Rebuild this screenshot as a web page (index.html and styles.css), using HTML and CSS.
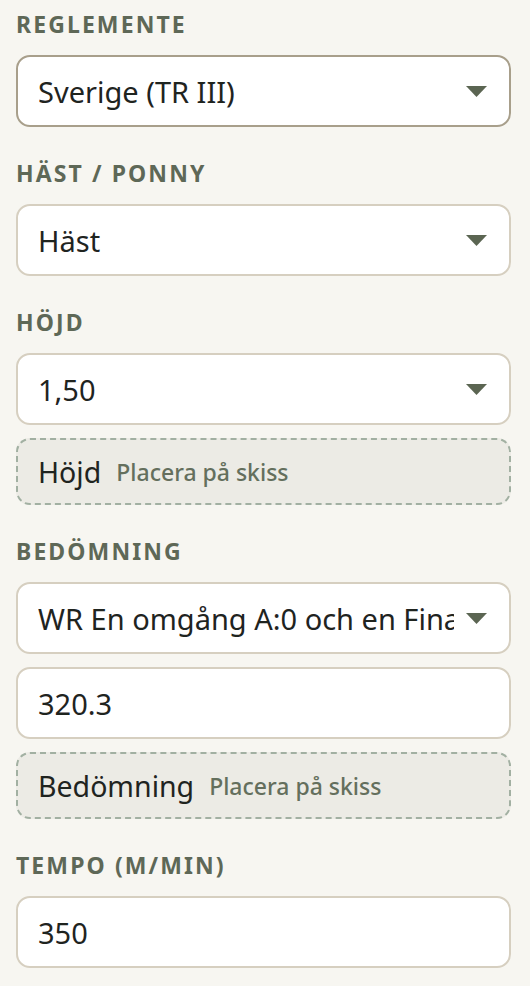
FILE: index.html
```html
<!DOCTYPE html>
<html lang="sv">
<head>
<meta charset="utf-8">
<title>Inställningar</title>
<link rel="stylesheet" href="styles.css">
</head>
<body>
<div class="panel">
  <section class="field">
    <div class="label">Reglemente</div>
    <div class="control select focused">
      <span class="value">Sverige (TR III)</span>
      <svg class="arrow" viewBox="0 0 21 11" width="21" height="11"><path d="M0 0H21L10.5 11Z"/></svg>
    </div>
  </section>

  <section class="field">
    <div class="label">Häst / Ponny</div>
    <div class="control select">
      <span class="value">Häst</span>
      <svg class="arrow" viewBox="0 0 21 11" width="21" height="11"><path d="M0 0H21L10.5 11Z"/></svg>
    </div>
  </section>

  <section class="field">
    <div class="label">Höjd</div>
    <div class="control select">
      <span class="value">1,50</span>
      <svg class="arrow" viewBox="0 0 21 11" width="21" height="11"><path d="M0 0H21L10.5 11Z"/></svg>
    </div>
    <div class="place">
      <span class="place-name">Höjd</span>
      <span class="place-hint">Placera på skiss</span>
    </div>
  </section>

  <section class="field">
    <div class="label">Bedömning</div>
    <div class="control select">
      <span class="value">WR En omgång A:0 och en Final</span>
      <svg class="arrow" viewBox="0 0 21 11" width="21" height="11"><path d="M0 0H21L10.5 11Z"/></svg>
    </div>
    <div class="control">
      <span class="value">320.3</span>
    </div>
    <div class="place">
      <span class="place-name">Bedömning</span>
      <span class="place-hint">Placera på skiss</span>
    </div>
  </section>

  <section class="field">
    <div class="label">Tempo (m/min)</div>
    <div class="control">
      <span class="value">350</span>
    </div>
  </section>
</div>
</body>
</html>
```

FILE: styles.css
```css
html, body {
  margin: 0;
  padding: 0;
  background: #f7f6f1;
}

body {
  font-family: "Noto Sans", "Liberation Sans", sans-serif;
  color: #1f241f;
}

.panel {
  padding: 10px 19px 0 16px;
  display: flex;
  flex-direction: column;
  gap: 32px;
}

.field {
  display: flex;
  flex-direction: column;
  gap: 13px;
}

.label {
  font-size: 23px;
  line-height: 28px;
  font-weight: 700;
  letter-spacing: 2.1px;
  text-transform: uppercase;
  color: #5e6857;
  margin-bottom: 4px;
}

.control {
  box-sizing: border-box;
  height: 72px;
  background: #ffffff;
  border: 2px solid #d6cfc0;
  border-radius: 14px;
  display: flex;
  align-items: center;
  padding: 0 22px 0 20px;
  gap: 12px;
}

.control.focused {
  border-color: #a89f8b;
}

.value {
  flex: 1;
  min-width: 0;
  font-size: 29px;
  white-space: nowrap;
  overflow: hidden;
  color: #1f241f;
}

.arrow {
  flex: none;
  fill: #5b6552;
}

.place {
  box-sizing: border-box;
  height: 67px;
  background: #ecebe5;
  border: 2px dashed #a2b0a2;
  border-radius: 14px;
  display: flex;
  align-items: center;
  gap: 15px;
  padding: 0 20px;
}

.place-name {
  font-size: 28.5px;
  color: #1f241f;
}

.place-hint {
  font-size: 23px;
  font-weight: 500;
  color: #646f5d;
}
```
